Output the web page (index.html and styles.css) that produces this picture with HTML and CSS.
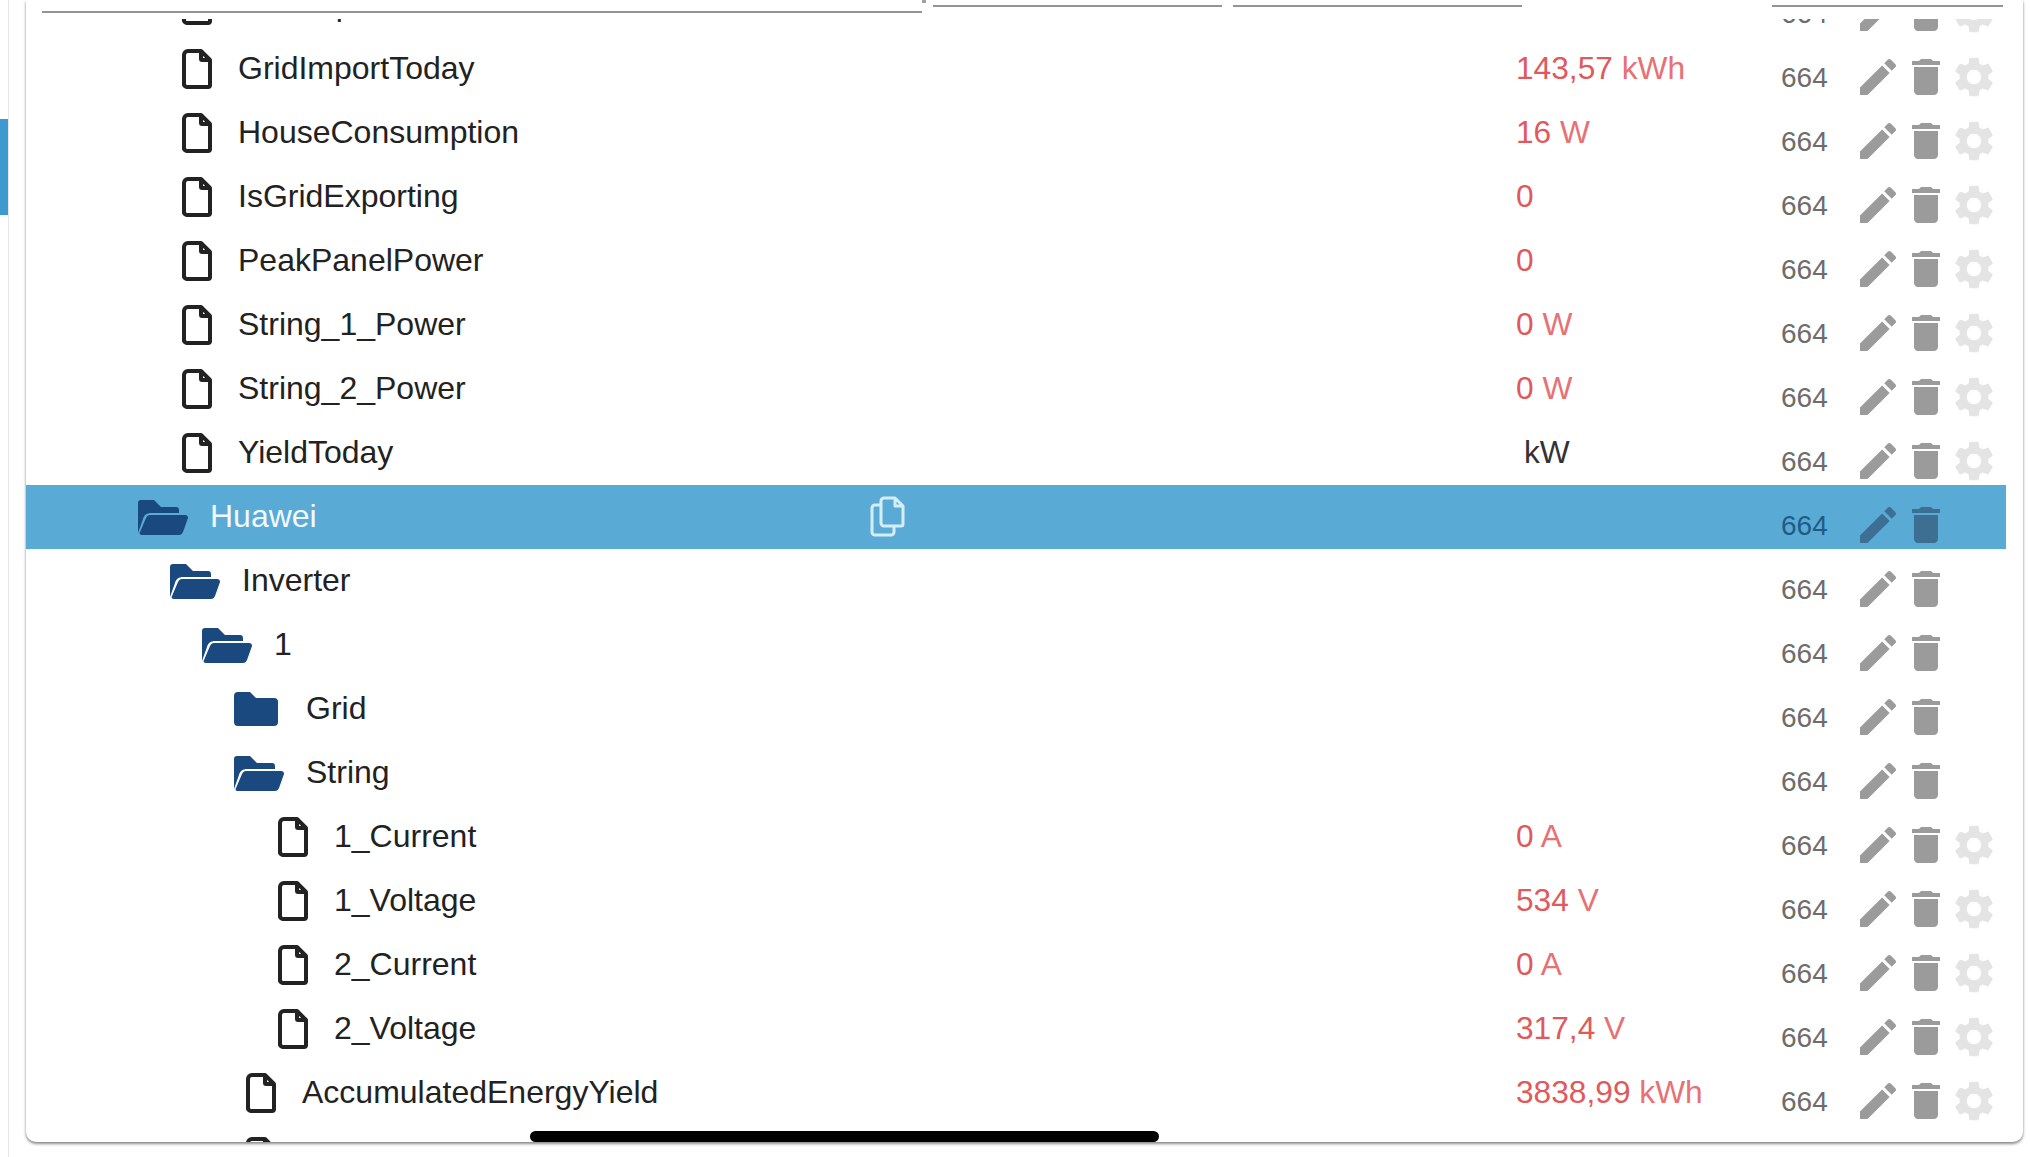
FILE: index.html
```html
<!DOCTYPE html>
<html lang="en">
<head>
    <meta charset="UTF-8">
    <title>Objects</title>
    <link rel="stylesheet" href="styles.css">
</head>
<body>
    <svg class="defs" width="0" height="0">
        <symbol id="file" viewBox="0 0 30 40"><path d="M6 2h13l9 9v25a2 2 0 0 1-2 2H6a4 4 0 0 1-4-2V6a4 4 0 0 1 4-4zM19 3v7a1 1 0 0 0 1 1h7" fill="none" stroke="currentColor" stroke-width="4" stroke-linejoin="round"/></symbol>
        <symbol id="folder-open" viewBox="0 0 50 35"><path d="M0 3a3 3 0 0 1 3-3h13l7 7h15a3 3 0 0 1 3 3v3H13c-4 0-7 2-8 6L0 33z"/><path d="M12 15h35c2 0 3 1 3 3l-5 14c-1 2-2 3-4 3H4c-2 0-3-1-2-3l6-14c1-2 2-3 4-3z"/></symbol>
        <symbol id="folder" viewBox="0 0 44 34"><path d="M0 4a4 4 0 0 1 4-4h12l6 6h18a4 4 0 0 1 4 4v20a4 4 0 0 1-4 4H4a4 4 0 0 1-4-4z"/></symbol>
        <symbol id="copy" viewBox="0 0 35 41"><g fill="none" stroke="currentColor" stroke-width="3" stroke-linejoin="round"><path d="M14 2h11l8 8v18a2 2 0 0 1-2 2H14a3 3 0 0 1-3-3V5a3 3 0 0 1 3-3zM25 3v7h7"/><path d="M11 9H5a3 3 0 0 0-3 3v24a3 3 0 0 0 3 3h16a3 3 0 0 0 3-3v-6"/></g></symbol>
        <symbol id="edit" viewBox="0 0 24 24"><path d="M3 17.250V21h3.750L17.810 9.940l-3.750-3.750L3 17.250zM20.710 7.040c.39-.39.39-1.020 0-1.410l-2.340-2.340c-.39-.39-1.020-.39-1.410 0l-1.830 1.830 3.750 3.750 1.830-1.830z"/></symbol>
        <symbol id="trash" viewBox="0 0 24 24"><path d="M6 19c0 1.100.9 2 2 2h8c1.100 0 2-.9 2-2V7H6v12zM19 4h-3.500l-1-1h-5l-1 1H5v2h14V4z"/></symbol>
        <symbol id="gear" viewBox="0 0 24 24"><path d="M19.140 12.940c.04-.3.06-.61.06-.94 0-.32-.02-.64-.07-.94l2.030-1.580c.18-.14.23-.41.12-.61l-1.920-3.320c-.12-.22-.37-.29-.59-.22l-2.390.96c-.5-.38-1.030-.7-1.620-.94l-.36-2.540c-.04-.24-.24-.41-.48-.41h-3.840c-.24 0-.43.17-.47.41l-.36 2.540c-.59.24-1.130.57-1.620.94l-2.390-.96c-.22-.08-.47 0-.59.22L2.740 8.870c-.12.21-.08.47.12.61l2.030 1.580c-.05.3-.09.63-.09.94s.02.64.07.94l-2.030 1.580c-.18.14-.23.41-.12.61l1.920 3.320c.12.22.37.29.59.22l2.390-.96c.5.38 1.030.7 1.620.94l.36 2.540c.05.24.24.41.48.41h3.840c.24 0 .44-.17.47-.41l.36-2.540c.59-.24 1.130-.56 1.620-.94l2.390.96c.22.08.47 0 .59-.22l1.920-3.320c.12-.22.07-.47-.12-.61l-2.010-1.580zM12 15.600c-1.980 0-3.600-1.620-3.600-3.600s1.620-3.600 3.600-3.600 3.600 1.620 3.600 3.600-1.620 3.600-3.600 3.600z"/></symbol>
    </svg>

    <div class="page">
        <div class="side"><div class="side-mark"></div></div>
        <div class="card">
            <div class="filters">
                <div class="filter filter-name"></div>
                <div class="filter-mark"></div>
                <div class="filter filter-small"></div>
                <div class="filter filter-small"></div>
                <div class="filter filter-acl"></div>
            </div>
            <div class="list" id="list"></div>
            <div class="home-bar"></div>
        </div>
    </div>

    <script>
        // type, tree level, name, value, unit
        const rows = [
            ["file", 0, "GridExport", "", ""],
            ["file", 0, "GridImportToday", "143,57", "kWh"],
            ["file", 0, "HouseConsumption", "16", "W"],
            ["file", 0, "IsGridExporting", "0", ""],
            ["file", 0, "PeakPanelPower", "0", ""],
            ["file", 0, "String_1_Power", "0", "W"],
            ["file", 0, "String_2_Power", "0", "W"],
            ["file", 0, "YieldToday", "", "kW"],
            ["open", 0, "Huawei", "", "", true],
            ["open", 1, "Inverter", "", ""],
            ["open", 2, "1", "", ""],
            ["closed", 3, "Grid", "", ""],
            ["open", 3, "String", "", ""],
            ["file", 3, "1_Current", "0", "A"],
            ["file", 3, "1_Voltage", "534", "V"],
            ["file", 3, "2_Current", "0", "A"],
            ["file", 3, "2_Voltage", "317,4", "V"],
            ["file", 2, "AccumulatedEnergyYield", "3838,99", "kWh"],
            ["file", 2, "", "", ""]
        ];

        const icons = { file: "file", open: "folder-open", closed: "folder" };

        function use(name, cls) {
            return `<svg class="${cls}"><use href="#${name}"></use></svg>`;
        }

        document.getElementById("list").innerHTML = rows.map(([type, level, name, value, unit, selected]) => {
            const isFile = type === "file";
            return `<div class="row${selected ? " selected" : ""}">
                <div class="name-cell ${isFile ? "is-file" : "is-folder"}" style="padding-left: ${level * 32}px">
                    ${use(icons[type], "icon-" + type)}
                    <span class="name">${name}</span>
                    ${selected ? use("copy", "icon-copy") : ""}
                </div>
                <div class="value-cell">${value ? `<span class="value">${value}</span> ` : ""}<span class="${value ? "unit" : "unit-plain"}">${unit}</span></div>
                <div class="mode-cell">664</div>
                <div class="actions">
                    ${use("edit", "action")}${use("trash", "action")}${isFile ? use("gear", "action gear") : ""}
                </div>
            </div>`;
        }).join("");
    </script>
</body>
</html>
```

FILE: styles.css
```css
* {
    box-sizing: border-box;
}

html, body {
    margin: 0;
    height: 100%;
    overflow: hidden;
    background: #fff;
}

body {
    font-family: "Liberation Sans", Arial, sans-serif;
    font-size: 32px;
    color: #222;
}

.defs {
    display: none;
}

.page {
    display: flex;
    height: 1157px;
}

.side {
    width: 9px;
    padding-top: 119px;
    border-right: 1px solid #e6e6e6;
}

.side-mark {
    width: 8px;
    height: 96px;
    background: #3d99d0;
}

.card {
    position: relative;
    display: flex;
    flex-direction: column;
    width: 1997px;
    height: 1142px;
    margin-left: 17px;
    border-radius: 0 0 10px 10px;
    background: #fff;
    box-shadow: 0 2px 3px rgba(0, 0, 0, 0.45), 0 0 2px rgba(0, 0, 0, 0.1);
    overflow: hidden;
}

.filters {
    display: flex;
    flex: none;
    align-items: flex-start;
    height: 19px;
    padding-left: 16px;
}

.filter {
    border-bottom: 2px solid #949494;
}

.filter-name {
    width: 880px;
    height: 13px;
}

.filter-mark {
    width: 4px;
    height: 3px;
    margin-right: 7px;
    background: #a0a0a0;
}

.filter-small {
    width: 289px;
    height: 7px;
    margin-right: 11px;
}

.filter-acl {
    width: 231px;
    height: 7px;
    margin-left: 239px;
}

.list {
    flex: 1;
    width: 1980px;
    min-height: 0;
    overflow: hidden;
}

.row {
    display: flex;
    height: 64px;
}

.row:first-child {
    margin-top: -46px;
}

.name-cell {
    position: relative;
    display: flex;
    align-items: center;
    width: 1490px;
    margin-left: 112px;
    margin-right: -112px;
}

.name-cell.is-file {
    margin-left: 156px;
    margin-right: -156px;
}

.name {
    margin-bottom: 2px;
    white-space: nowrap;
}

.icon-file {
    flex: none;
    width: 30px;
    height: 40px;
    margin-right: 26px;
    color: #222;
}

.icon-open {
    flex: none;
    width: 50px;
    height: 35px;
    margin-right: 22px;
    fill: #19497f;
}

.icon-closed {
    flex: none;
    width: 44px;
    height: 34px;
    margin-right: 28px;
    fill: #19497f;
}

.icon-copy {
    position: absolute;
    left: 732px;
    top: 11px;
    width: 35px;
    height: 41px;
    color: #d6edf8;
}

.value-cell {
    flex: none;
    width: 265px;
    font-size: 31.7px;
    line-height: 62px;
    white-space: nowrap;
}

.value {
    color: #df5a5c;
}

.unit {
    color: #e77173;
}

.unit-plain {
    margin-left: 8px;
    color: #333;
}

.mode-cell {
    flex: none;
    width: 73px;
    padding-top: 19px;
    font-size: 28px;
    line-height: 44px;
    color: #6c6c6c;
}

.actions {
    display: flex;
    flex: none;
    align-items: flex-end;
    width: 144px;
    height: 64px;
}

.action {
    flex: none;
    width: 48px;
    height: 48px;
    fill: #9b9b9b;
}

.gear {
    fill: #e4e4e4;
}

.selected {
    background: #5aaad6;
}

.selected .name {
    color: #f2f9fc;
}

.selected .mode-cell {
    color: #1e5c86;
}

.selected .action {
    fill: #3c6f92;
}

.home-bar {
    position: absolute;
    left: 504px;
    bottom: 0;
    width: 629px;
    height: 11px;
    border-radius: 6px;
    background: #000;
}
```
